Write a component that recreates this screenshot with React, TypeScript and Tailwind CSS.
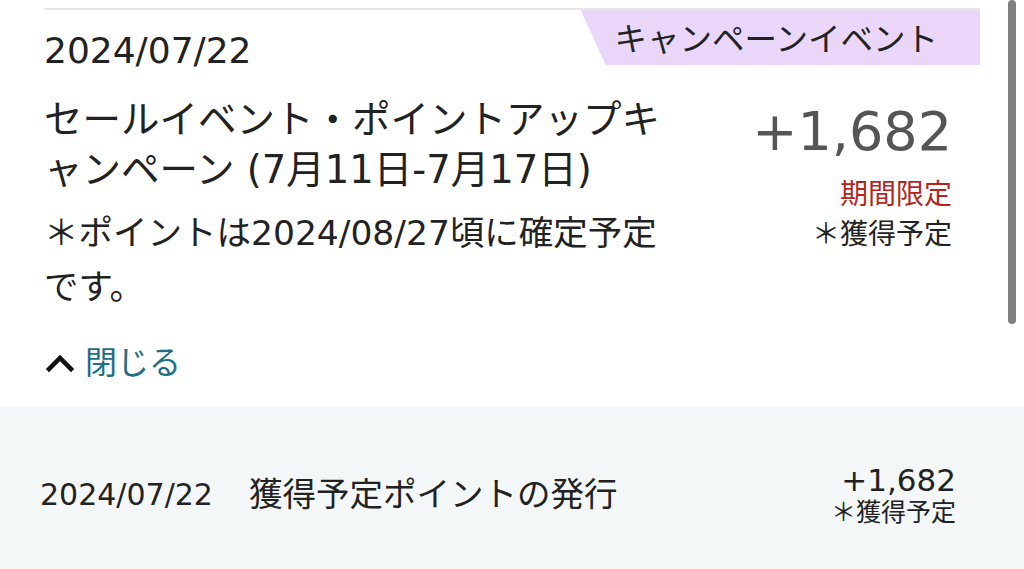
import React from "react";

const font = "font-['DejaVu_Sans','Noto_Sans_CJK_JP',sans-serif]";

function ChevronUp() {
  return (
    <svg width="30" height="20" viewBox="0 0 30 20" className="block">
      <polyline
        points="4,16 15,5 26,16"
        fill="none"
        stroke="#111"
        strokeWidth="4.5"
        strokeLinecap="square"
        strokeLinejoin="miter"
      />
    </svg>
  );
}

export default function App() {
  return (
    <div className={`relative h-[569px] w-full overflow-hidden bg-white text-[#222] ${font}`}>
      {/* scrollbar */}
      <div className="absolute right-[8px] top-0 h-[324px] w-[8px] rounded-full bg-[#808080]" />

      {/* expanded history card */}
      <div className="ml-[44px] mt-[8px] w-[936px] border-t-2 border-[#e6e6e6] pb-[24px]">
        <div className="flex items-start justify-between">
          <div className="pt-[19px] text-[36px] leading-[43px]">2024/07/22</div>
          <div className="h-[55px] overflow-hidden bg-[#e9d6f8] pl-[34px] pr-[42px] text-[32.5px] leading-[60px] [clip-path:polygon(0_0,100%_0,100%_100%,25px_100%)]">
            キャンペーンイベント
          </div>
        </div>

        <div className="mt-[23px] flex items-start justify-between pr-[28px]">
          <div className="w-[625px]">
            <div className="text-[38.5px] leading-[50px]">
              セールイベント・ポイントアップキャンペーン (7月11日-7月17日)
            </div>
            <div className="mt-[11px] text-[34.5px] leading-[54px]">
              ＊ポイントは2024/08/27頃に確定予定です。
            </div>
            <button className="mt-[29px] flex h-[40px] items-center gap-[10px] pl-[1px]">
              <ChevronUp />
              <span className="text-[32px] leading-[40px] text-[#1e6e86]">閉じる</span>
            </button>
          </div>

          <div className="flex flex-col items-end pt-[7px]">
            <div className="text-[54px] leading-[60px] text-[#555]">+1,682</div>
            <div className="mt-[13px] text-[28px] leading-[40px] text-[#b3261e]">期間限定</div>
            <div className="text-[28px] leading-[40px]">＊獲得予定</div>
          </div>
        </div>
      </div>

      {/* history row */}
      <div className="flex h-[162px] items-center justify-between bg-[#f4f7f8] pl-[40px] pr-[68px] pt-[14px]">
        <div className="flex items-center gap-[36px]">
          <span className="text-[30px] leading-[40px]">2024/07/22</span>
          <span className="text-[33.5px] leading-[40px]">獲得予定ポイントの発行</span>
        </div>
        <div className="flex flex-col items-end">
          <div className="text-[31px] leading-[36px]">+1,682</div>
          <div className="text-[25px] leading-[30px]">＊獲得予定</div>
        </div>
      </div>
    </div>
  );
}
